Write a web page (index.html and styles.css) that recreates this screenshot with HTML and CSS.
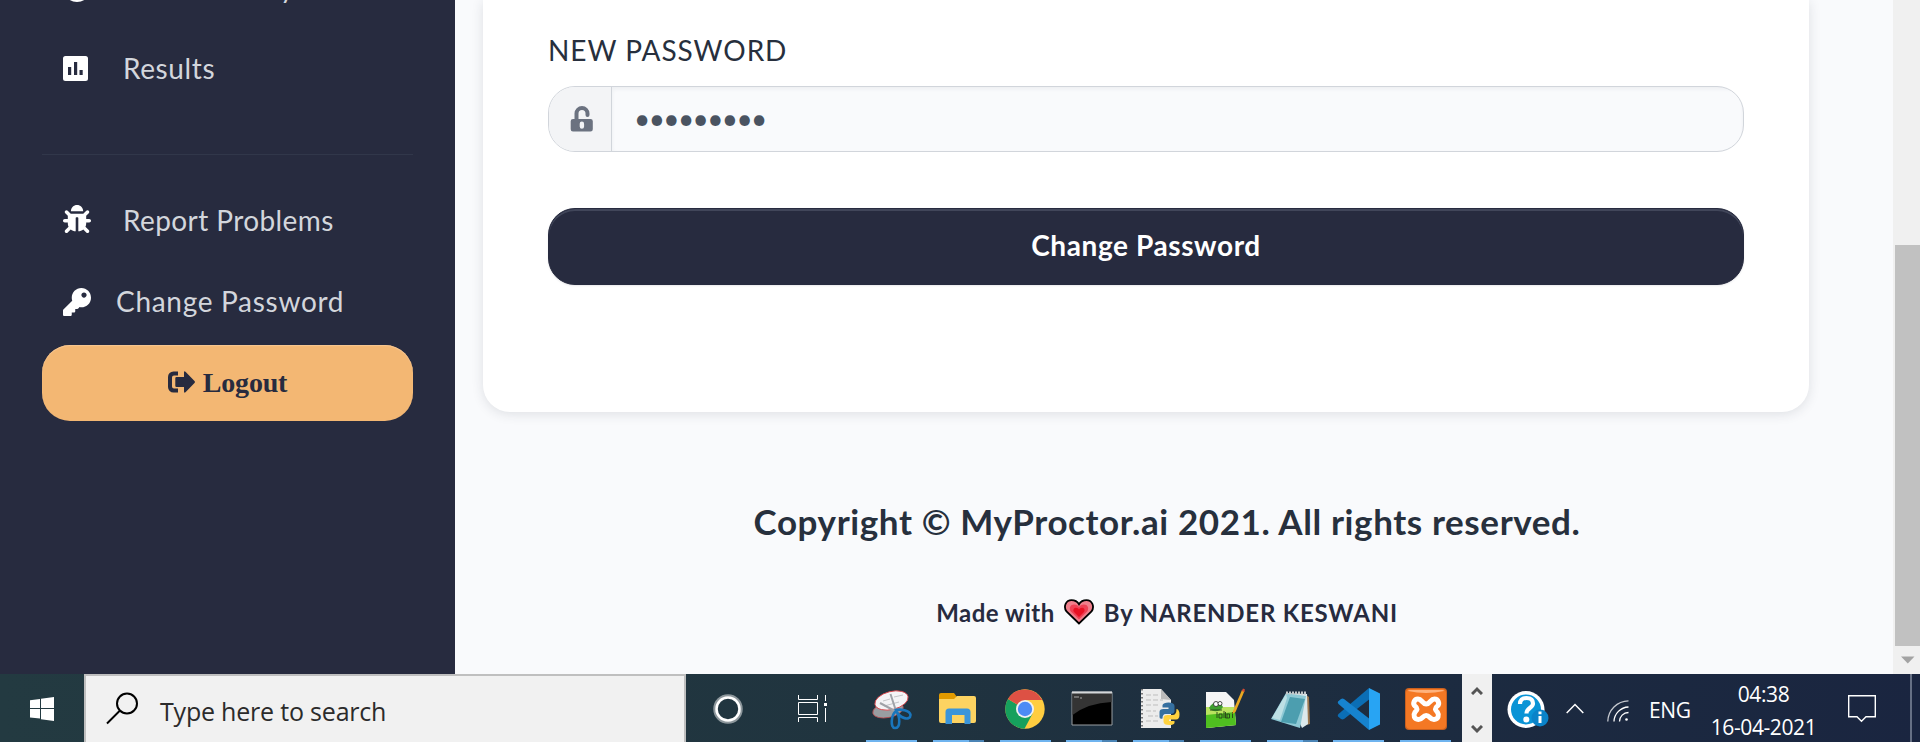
FILE: index.html
```html
<!DOCTYPE html>
<html lang="en">
<head>
<meta charset="utf-8">
<title>MyProctor.ai</title>
<link rel="stylesheet" href="styles.css">
</head>
<body>
<div class="view">
  <nav class="sidebar">
    <a class="item"><svg class="ico" viewBox="0 0 28 28"><circle cx="14" cy="14" r="12" fill="none" stroke="#fff" stroke-width="4"/><path d="M14 7v8l5 3" fill="none" stroke="#fff" stroke-width="3"/></svg><span class="t-exam">Exam History</span></a>
    <a class="item results"><svg class="ico" viewBox="0 0 28 28"><path fill="#fff" fill-rule="evenodd" d="M2.500 1h20a2.500 2.500 0 0 1 2.500 2.500v20a2.500 2.500 0 0 1-2.500 2.500h-20a2.500 2.500 0 0 1-2.500-2.500v-20a2.500 2.500 0 0 1 2.500-2.500zM5 12v8h3.200v-8zM11 7v13h3.200V7zM16.500 15v5h3.200v-5z"/></svg><span class="t-results">Results</span></a>
    <div class="rule"></div>
    <a class="item"><svg class="ico up" viewBox="0 0 512 512"><path fill="#fff" d="M511.988 288.900c-.478 17.430-15.217 31.100-32.653 31.100H424v16c0 21.864-4.882 42.584-13.600 61.145l60.228 60.228c12.496 12.497 12.496 32.758 0 45.255-12.498 12.497-32.759 12.496-45.256 0l-54.736-54.736C345.886 467.965 314.351 480 280 480V236c0-6.627-5.373-12-12-12h-24c-6.627 0-12 5.373-12 12v244c-34.351 0-65.886-12.035-90.636-32.108l-54.736 54.736c-12.498 12.497-32.759 12.496-45.256 0-12.496-12.497-12.496-32.758 0-45.255l60.228-60.228C92.882 378.584 88 357.864 88 336v-16H32.666C15.230 320 .491 306.330.013 288.900-.484 270.816 14.028 256 32 256h56v-58.745l-46.628-46.628c-12.496-12.497-12.496-32.758 0-45.255 12.498-12.497 32.758-12.497 45.256 0L141.255 160h229.489l54.627-54.627c12.498-12.497 32.758-12.497 45.256 0 12.496 12.497 12.496 32.758 0 45.255L424 197.255V256h56c17.972 0 32.484 14.816 31.988 32.900zM257 0c-61.856 0-112 50.144-112 112h224C369 50.144 318.856 0 257 0z"/></svg><span class="t-report">Report Problems</span></a>
    <a class="item key"><svg class="ico" viewBox="0 0 512 512"><path fill="#fff" d="M512 176.001C512 273.203 433.202 352 336 352c-11.220 0-22.190-1.062-32.827-3.069l-24.012 27.014A23.999 23.999 0 0 1 261.223 384H224v40c0 13.255-10.745 24-24 24h-40v40c0 13.255-10.745 24-24 24H24c-13.255 0-24-10.745-24-24v-78.059c0-6.365 2.529-12.470 7.029-16.971l161.802-161.802C163.108 213.814 160 195.271 160 176 160 78.798 238.797.001 335.999 0 433.488-.001 512 78.511 512 176.001zM336 128c0 26.510 21.490 48 48 48s48-21.490 48-48-21.490-48-48-48-48 21.490-48 48z"/></svg><span class="t-change">Change Password</span></a>
    <button class="logout"><svg class="out" viewBox="0 0 28 24"><path fill="#272b3f" d="M11 1.500H6.500A5.500 5.500 0 0 0 1 7v10a5.500 5.500 0 0 0 5.500 5.500H11v-4H7A2 2 0 0 1 5 16.500v-9a2 2 0 0 1 2-2h4zM17 2.500q0-2 1.500-.7l9 9.200q.9 1 0 2l-9 9.200q-1.500 1.200-1.500-.7V17H9.500q-1.200 0-1.200-1.200V8.200Q8.300 7 9.500 7H17z"/></svg><span>Logout</span></button>
  </nav>
  <main class="main">
    <section class="card">
      <label class="label">NEW PASSWORD</label>
      <div class="field">
        <div class="addon"><svg class="lock" viewBox="0 0 24 26"><path fill="none" stroke="#6b7280" stroke-width="4" d="M6.500 13V7.500a5.500 5.500 0 0 1 11 0V9" stroke-linecap="round"/><path fill="#6b7280" fill-rule="evenodd" d="M3 13h17.500a2.300 2.300 0 0 1 2.300 2.300v7.900a2.300 2.300 0 0 1-2.300 2.300H3A2.300 2.300 0 0 1 .7 23.200v-7.900A2.300 2.300 0 0 1 3 13zM9.700 17.800v2.700a2.200 2.200 0 0 0 4.400 0v-2.700a2.200 2.200 0 0 0-4.400 0z"/></svg></div>
        <div class="dots">•••••••••</div>
      </div>
      <button class="submit">Change Password</button>
    </section>
    <footer class="footer">
      <div class="copy">Copyright © MyProctor.ai 2021. All rights reserved.</div>
      <div class="made"><span class="m1">Made with</span><svg class="heart" viewBox="0 0 30 26"><path d="M15 24.500 2.500 12.500C-1 7.500 2 1.200 7.500 1.200c3.500 0 6 1.600 7.500 4 1.500-2.400 4-4 7.500-4 5.500 0 8.500 6.300 5 11.300z" fill="#f07f8c" stroke="#000" stroke-width="1.800"/><path d="M15 20.500 6.800 12.500C4.500 9 6.500 5.500 10 5.500c2.500 0 4 1 5 2.800 1-1.800 2.500-2.800 5-2.800 3.500 0 5.500 3.500 3.200 7z" fill="#ef4155"/><path d="M15 18 10 13c-1.500-2.200 0-4.200 2-4.200 1.500 0 2.400.7 3 1.700.6-1 1.500-1.700 3-1.700 2 0 3.500 2 2 4.200z" fill="#e81123"/></svg><span class="m2">By NARENDER KESWANI</span></div>
    </footer>
  </main>
  <div class="scroll"><div class="thumb"></div><svg class="down" viewBox="0 0 14 8"><path d="M0 .5h13.500L6.800 7.500z" fill="#a3a3a3"/></svg></div>
</div>
<div class="taskbar">
  <div class="start"><svg width="24" height="24" viewBox="0 0 24 24" fill="#fff"><path d="M0 3.300 10 1.900V11H0zM11 1.800 24 0v11H11zM0 12h10v9.600L0 20.500zM11 12h13v12l-13-1.800z"/></svg></div>
  <div class="search"><svg width="33" height="33" viewBox="0 0 33 33" fill="none" stroke="#000" stroke-width="2"><circle cx="21" cy="11.500" r="10"/><path d="M14 18.500 1 31.500"/></svg><span>Type here to search</span></div>
  <div class="sys"><svg width="30" height="30" viewBox="0 0 30 30" fill="none"><circle cx="15" cy="15" r="13.500" stroke="#8d979c" stroke-width="2.500"/><circle cx="15" cy="15" r="11.500" stroke="#fff" stroke-width="2.600"/></svg></div>
  <div class="sys tv"><svg width="30" height="28" viewBox="0 0 30 28" fill="none" stroke="#fff"><path d="M.5 0v4.500h19V0M.5 7.500h19v12H.5zM.5 27v-4.500h19V27M27.500 0v6M27.500 13v14"/><path d="M26 8h3v3h-3z" fill="#fff" stroke="none"/></svg></div>
  <div class="apps">
    <div class="app"><svg viewBox="0 0 44 44"><ellipse cx="18" cy="22" rx="15.500" ry="7.500" fill="#999da1" stroke="#b9484c" stroke-width=".8" transform="rotate(-12 18 22)"/><ellipse cx="21.500" cy="12.500" rx="17" ry="9" fill="#f4f4f6" stroke="#d9464b" stroke-width=".9" transform="rotate(-14 21.500 12.500)"/><path d="m13 13 7-2M24 9l9-2M14 18l15-4" stroke="#c3c5c8" stroke-width="1"/><path d="M10 15 25 23M20.500 6 26 23" stroke="#a0a3a8" stroke-width="2"/><path d="M26 22c4-1 14 0 14.500 5 0 6-11 4-14.500-5zm0 1c-5 4-6 17-1 17 6 0 5-12 1-17z" fill="none" stroke="#1976bd" stroke-width="2.600"/></svg></div>
    <div class="app two"><svg viewBox="0 0 44 44"><path d="M3 7q0-2 2-2h13l3 4v7H3z" fill="#e19a00"/><path d="M3 11h15l3-3h17q2 0 2 2v23q0 2-2 2H5q-2 0-2-2z" fill="#fdd361"/><path d="M9.500 36V24q0-3.500 3.500-3.500h18q3.500 0 3.500 3.500v12h-6v-9H16v9z" fill="#3b95da"/></svg></div>
    <div class="app"><svg viewBox="0 0 44 44"><circle cx="22" cy="21" r="19.700" fill="#ffcd40"/><path d="M22 21 5 11a19.700 19.700 0 0 0 16.500 29.700l8-15z" fill="#16a05d"/><path d="M22 21 5 11a19.700 19.700 0 0 1 34.200 1H22z" fill="#dd5144"/><circle cx="22" cy="21" r="9" fill="#f1f1f1"/><circle cx="22" cy="21" r="7.200" fill="#4c8bf5"/></svg></div>
    <div class="app two"><svg viewBox="0 0 44 44"><path d="M2 4h40v33H2z" fill="#000" stroke="#9a9fa3"/><path d="M2.500 4.500h39V14Q18 15 2.500 27z" fill="#343434"/><path d="M2 4.500h40" stroke="#d5d8da" stroke-width="2"/><path d="M4 9h5m1 1h2" stroke="#aaa"/></svg></div>
    <div class="app two"><svg viewBox="0 0 44 44"><path d="M4 1h20l10 11v28H4z" fill="#ececec"/><path d="m24 1 10 11-10-1z" fill="#bbb"/><path d="M5 1v40" stroke="#777" stroke-width="2" stroke-dasharray="1.500 2.500"/><path d="M9 7h12M9 12h17M9 17h12M9 23h10M11 28h10M9 33h12" stroke="#bdbdbd" stroke-dasharray="5 2"/><path d="M22.500 29v-5q0-3 4-3h5v-1.500h-6V17q1-2.500 6-2.500 6 0 6 3.500v5q0 3-4 3h-5q-3 0-3 4.500-3 1-3-1.500z" fill="#3670a0"/><path d="M40 21q2.500 1 2.500 5.500 0 5-3.500 5h-7V33h5.500v2q-1 2-5 2-6 0-6-3.500V30q0-3 4-3h5q4 0 4-6z" fill="#ffd23e"/></svg></div>
    <div class="app"><svg viewBox="0 0 44 44"><path d="M3 4h20l8 8 2 25-30 3z" fill="#f5f5f5"/><path d="M3 19h28l2 18-30 3z" fill="#b9e35f"/><path d="m3 27 29-3 1 13-30 3z" fill="#4fbf20"/><path d="M6 20c4-7 11-7 14-1-3 5-10 6-14 1z" fill="#3f9f2f"/><circle cx="13" cy="16" r="2.500" fill="#fff" stroke="#222" stroke-width=".8"/><circle cx="17" cy="15.500" r="2" fill="#fff" stroke="#222" stroke-width=".8"/><path d="M7 22h12M14 24v6m2-4v4h3v-4h-3m5-3v7m3-4v4m-1.500-6v6h4v-4h-3m6-2v6" stroke="#264018" stroke-width=".9" fill="none"/><path d="m30 23 9-21 2.500 1L32.500 24l-3 2z" fill="#eaa820"/><path d="m38.700 3 1.300-2.500 2 1-.8 2.500z" fill="#d34a33"/></svg></div>
    <div class="app two"><svg viewBox="0 0 44 44"><path d="m36 7 3 2 1 27-7 2z" fill="#9b7850"/><path d="m16 5 21 1 1 30-6 4z" fill="#dce9ec"/><path d="m16 5 20 3-6 32L1 31z" fill="#8ec9d5"/><path d="m20 9 15 2-9 25-15-2z" fill="#4c9eaf"/><path d="M16 6 2 30l8 2 7-22z" fill="#bde0e5"/><path d="M16 5h21" stroke="#c3c8c9" stroke-width="3" stroke-dasharray="2 1"/></svg></div>
    <div class="app"><svg viewBox="0 0 44 44"><path d="M1 28.500 4 31q1.500.8 3 0L34 10 32 0 1.500 26q-1.200 1.300-.5 2.500z" fill="#0b6eb5"/><path d="M1 13.500 4 11q1.500-.8 3 0L34 32l-2 10L1.500 16q-1.200-1.300-.5-2.500z" fill="#1683cf"/><path d="m32 0 11 5.500v31L32 42z" fill="#28a4f3"/></svg></div>
    <div class="app"><svg viewBox="0 0 44 44"><rect x="1" y="0" width="42" height="42" rx="4" fill="#c9601f"/><rect x="2" y="1" width="40" height="40" rx="4" fill="#f47824"/><path d="M4 3q0-1 2-1h32q2 0 2 1-18 4-36 0z" fill="#ffb27c"/><path d="M14 11c-4 0-5.500 5-3 7 1.500 1 2 2 2 3.200s-1 2-2 3c-2 3-1 7 3.500 7.300 4 0 4-4 7.700-4s3.700 4 7.700 4c4.500-.3 5.500-4.300 3.500-7.300-1-1-2-2-2-3s.5-2.200 2-3.200c2.500-2 1-7-3-7-4 0-4 5-8.200 5s-4.200-5-8.200-5z" fill="none" stroke="#fff" stroke-width="5" stroke-linejoin="round"/></svg></div>
  </div>
  <div class="strip"><svg width="12" height="9" viewBox="0 0 12 9"><path d="m1 8 5-5 5 5" fill="none" stroke="#555" stroke-width="3"/></svg><svg width="12" height="9" viewBox="0 0 12 9"><path d="m1 1 5 5 5-5" fill="none" stroke="#555" stroke-width="3"/></svg></div>
  <div class="tray">
    <svg class="help" viewBox="0 0 42 38"><circle cx="19" cy="18.500" r="18.500" fill="#fff"/><circle cx="19" cy="18.500" r="15" fill="#0a94d6"/><path d="M13 13q0-6 6.500-6t6.500 5.500c0 4.500-6.500 4-6.500 10" fill="none" stroke="#fff" stroke-width="4.200"/><circle cx="19.300" cy="28.500" r="3" fill="#fff"/><circle cx="33" cy="27" r="8.500" fill="#0a83c9"/><path d="M33 25v7M33 20.500v2.700" stroke="#fff" stroke-width="3" fill="none"/></svg>
    <svg class="chev" viewBox="0 0 18 11"><path d="m.7 10 8.300-8.500 8.300 8.500" fill="none" stroke="#fff" stroke-width="1.500"/></svg>
    <svg class="wifi" viewBox="0 0 22 22" fill="none" stroke="#fff" stroke-width="1.300"><path d="M.8 21.500A21 21 0 0 1 21.500.8" opacity=".75"/><path d="M7 21.500A15 15 0 0 1 21.500 7M12.500 21.500a9 9 0 0 1 9-9"/><circle cx="19.500" cy="19.500" r="1.300" fill="#fff" stroke="none"/></svg>
    <span class="lang">ENG</span>
    <div class="clock"><span class="time">04:38</span><span class="date">16-04-2021</span></div>
    <svg class="note" viewBox="0 0 28 28"><path d="M.7.700h26.600v21H18l-4.500 4.500L9 21.700H.7z" fill="none" stroke="#fff" stroke-width="1.400"/></svg>
    <div class="peek"></div>
  </div>
</div>
</body>
</html>
```
FILE: styles.css
```css
* { box-sizing: border-box; }
body { margin: 0; height: 742px; overflow: hidden; font-family: Lato, "Noto Sans", sans-serif; background: #f9fafc; }
svg { display: block; flex: none; }
button { font: inherit; border: 0; padding: 0; margin: 0; }
.view { display: flex; height: 674px; overflow: hidden; }

.sidebar { width: 455px; flex: none; height: 674px; overflow: hidden; background: #272b3f; padding: 0 42px; }
.item { display: flex; align-items: center; height: 81px; padding-left: 21px; font-size: 28px; color: #d3d6dc; white-space: nowrap; }
.item:first-child { margin-top: -53px; }
.item svg { width: 28px; height: 28px; margin-right: 32px; }
.item svg.up { margin-top: -3px; }
.item span { padding-bottom: 2px; }
.item.key svg { margin-right: 25px; }
.results { margin-bottom: 45px; }
.rule { height: 1px; background: #31374a; margin-bottom: 25px; }
.t-exam { letter-spacing: .6px; }
.t-results { letter-spacing: .6px; }
.t-report { letter-spacing: .4px; }
.t-change { letter-spacing: .7px; }
.logout { display: flex; align-items: center; justify-content: center; gap: 8px; width: 371px; height: 76px; margin-top: 3px; padding-right: 1px; border-radius: 28px; background: #f3b773; box-shadow: inset 0 1px 1px #f7c793; color: #272b3f; font: bold 28px "Liberation Serif", serif; letter-spacing: -.2px; }
.out { width: 28px; height: 24px; margin-top: -3px; }

.main { flex: 1; min-width: 0; padding-left: 28px; }
.card { width: 1326px; height: 412px; padding: 0 65px; overflow: hidden; background: #fff; border-radius: 0 0 27px 27px; box-shadow: 0 2px 12px rgba(39,43,63,.13); }
.label { display: block; height: 86px; padding-top: 33px; font-size: 28px; line-height: 34px; color: #272f3d; letter-spacing: .95px; }
.field { display: flex; height: 66px; border: 1px solid #d1d5db; border-radius: 27px; overflow: hidden; background: #f9fafc; }
.addon { width: 63px; border-right: 1px solid #d1d5db; background: #f3f4f6; display: flex; align-items: center; padding-left: 21px; }
.lock { width: 24px; height: 26px; }
.dots { flex: 1; padding-left: 22px; line-height: 63px; font-size: 28px; color: #4a5361; box-shadow: inset 0 2px 4px rgba(39,43,63,.06); letter-spacing: -1.600px; }
.submit { display: block; width: 100%; height: 77px; margin-top: 56px; padding-bottom: 3px; border-radius: 27px; background: #272b3f; border: 1px solid #272b3f; box-shadow: inset 0 2px 0 #41465a, 0 1px 2px rgba(39,43,63,.1); color: #fff; font-size: 28px; font-weight: 700; letter-spacing: .6px; }
.footer { display: flex; flex-direction: column; align-items: center; width: 1368px; padding-top: 86px; color: #27303d; font-weight: 700; white-space: nowrap; }
.copy { font-size: 35px; line-height: 46px; letter-spacing: .6px; }
.made { display: flex; align-items: center; height: 30px; margin-top: 53px; font-size: 24px; color: #272b3f; }
.heart { width: 30px; height: 26px; margin: 0 10px 0 9px; }
.m1 { letter-spacing: .5px; }
.m2 { letter-spacing: .77px; }

.scroll { width: 27px; flex: none; background: #f0f0f0; padding: 245px 0 0 2px; }
.thumb { height: 401px; background: #c1c1c1; }
.down { width: 14px; height: 8px; margin: 10px 0 0 6px; }

.taskbar { display: flex; height: 68px; background: linear-gradient(90deg, #233a41 0, #20343f 45%, #1c2b40 75%, #1a2540 100%); font-family: "Open Sans", "Noto Sans", sans-serif; }
.start { width: 84px; display: flex; align-items: center; padding-left: 30px; flex: none; }
.start svg { margin-top: 2px; }
.search { width: 602px; flex: none; display: flex; align-items: center; gap: 21px; padding: 2px 0 0 20px; border: 2px solid #bfbfbf; border-bottom: 0; background: #f1f1f1; color: #2b2b2b; font-size: 25px; letter-spacing: -.2px; }
.search svg { margin-top: -4px; }
.search span { padding-top: 1px; }
.sys { width: 84px; flex: none; display: flex; align-items: center; justify-content: center; padding-top: 2px; }
.tv { padding-left: 2px; }
.apps { display: grid; grid-template-columns: repeat(9, 51px); column-gap: 15.750px; margin-left: 12px; width: 596px; flex: none; }
.app { height: 68px; padding: 14px 3.500px 0; border-bottom: 2px solid #6fb4ef; }
.app svg { width: 44px; height: 44px; }
.two { border-image: linear-gradient(90deg, #6fb4ef 69%, #4b84b5 69%) 2; }
.strip { width: 30px; flex: none; background: #f0f0f0; display: flex; flex-direction: column; align-items: center; justify-content: space-between; padding: 12px 0 8px; }
.tray { flex: 1; display: flex; align-items: center; color: #fff; font-size: 22px; padding-left: 15px; }
.help { width: 42px; height: 38px; margin-top: 4px; }
.chev { width: 18px; height: 11px; margin-left: 17px; }
.wifi { width: 22px; height: 22px; margin: 5px 20px 0 23px; }
.lang { width: 41px; padding-top: 3px; font-size: 21px; letter-spacing: -.4px; }
.clock { width: 106px; margin-left: 20.500px; display: flex; flex-direction: column; align-items: center; line-height: 33px; padding-top: 5px; font-size: 21px; white-space: nowrap; letter-spacing: -.4px; }
.note { width: 28px; height: 28px; margin: 2px 0 0 31px; }
.peek { width: 2px; height: 68px; margin-left: 34px; background: #667085; }
```
